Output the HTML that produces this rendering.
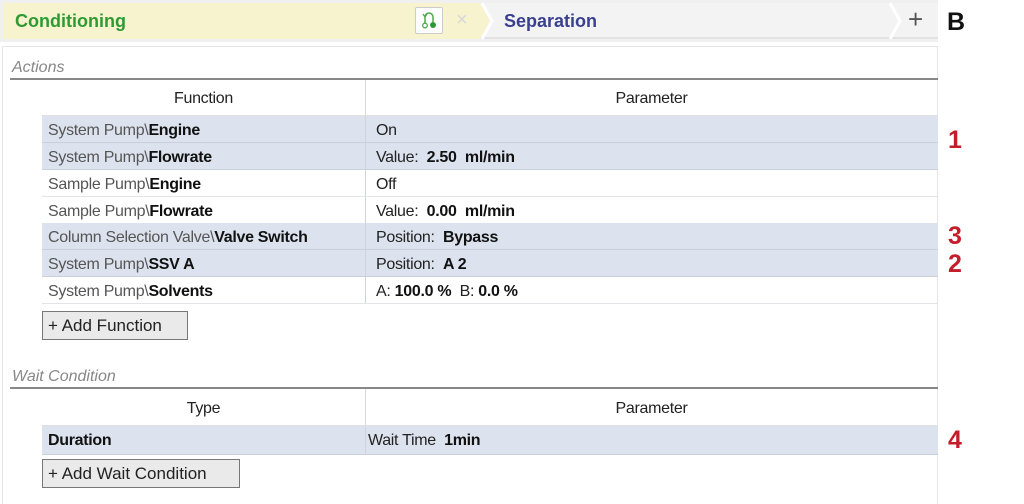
<!DOCTYPE html>
<html><head><meta charset="utf-8"><style>
*{margin:0;padding:0;box-sizing:border-box}
body{width:1024px;height:504px;background:#fff;font-family:"Liberation Sans",sans-serif;position:relative;overflow:hidden;color:#222}
.abs{position:absolute}
.t{font-size:16px;line-height:26px;white-space:nowrap;letter-spacing:-0.3px}
.g{color:#555}
b{color:#111}
.row{position:absolute;left:42px;width:896px;height:27px;border-bottom:1px solid #e2e4e8}
.row.h{background:#dce3ee;border-bottom:1px solid #c9d0dc}
.row .c1{position:absolute;left:6px;top:2px}
.row .c2{position:absolute;left:334px;top:2px}
.row::after{content:"";position:absolute;left:323px;top:0;bottom:0;width:1px;background:#d0d4da}
.hdr{position:absolute;left:42px;width:896px;height:36px;border-bottom:1px solid #e0e0e0}
.hdr::after{content:"";position:absolute;left:323px;top:0;bottom:0;width:1px;background:#d8d8d8}
.btn{position:absolute;left:42px;height:29px;border:1px solid #777;background:#eaeaea;font-size:17px;line-height:27px;padding:0 5px;white-space:nowrap;color:#222}
.red{position:absolute;left:948px;color:#c41e2a;font-size:25px;line-height:28px;font-weight:bold}
.lbl{position:absolute;left:12px;font-style:italic;color:#888;font-size:16px}
</style></head><body>
<div class="abs" style="left:0;top:0;width:938px;height:42px;background:#f0f0f0"></div>
<div class="abs" style="left:3px;top:3px;width:935px;height:36px;background:#f3f3f3;border-bottom:2px solid #e2e2e2"></div>
<svg class="abs" style="left:0;top:0" width="940" height="42">
<polygon points="3,3 480,3 490,21 480,39 3,39" fill="#f7f3cf"/>
<polyline points="482,3 492,21 482,39" fill="none" stroke="#fff" stroke-width="3"/>
<polyline points="890,3 900,21 890,39" fill="none" stroke="#fff" stroke-width="3"/>
</svg>
<div class="abs" style="left:15px;top:11px;font-size:18px;font-weight:bold;color:#2f9a33">Conditioning</div>
<div class="abs" style="left:415px;top:7px;width:28px;height:27px;background:#fff;border:1px solid #ccc;border-radius:2px"></div>
<svg class="abs" style="left:418px;top:9px" width="22" height="22" viewBox="0 0 22 22"><path d="M7 14 V8 a4 4 0 0 1 8 0 V13" fill="none" stroke="#4caa4c" stroke-width="1.5"/><path d="M5 5 l2 3 l2 -3" fill="none" stroke="#4caa4c" stroke-width="1.3"/><circle cx="7" cy="16.5" r="2.3" fill="none" stroke="#4caa4c" stroke-width="1.3"/><circle cx="15" cy="16" r="3" fill="#2f9a33"/></svg>
<div class="abs" style="left:456px;top:9px;font-size:20px;color:#d8d8d8">×</div>
<div class="abs" style="left:504px;top:11px;font-size:18px;font-weight:bold;color:#3a3f8f">Separation</div>
<div class="abs" style="left:908px;top:4px;font-size:26px;color:#555">+</div>
<div class="abs" style="left:947px;top:8px;font-size:25px;font-weight:bold;color:#111">B</div>
<div class="abs" style="left:2px;top:46px;width:936px;height:458px;border-left:1px solid #e6e6e6;border-top:1px solid #e6e6e6;border-right:1px solid #e6e6e6"></div>
<div class="lbl" style="top:59px">Actions</div>
<div class="abs" style="left:10px;top:78px;width:928px;height:2px;background:#888"></div>
<div class="hdr" style="top:80px"><div class="t abs" style="left:0;width:323px;text-align:center;top:6px">Function</div><div class="t abs" style="left:323px;width:573px;text-align:center;top:6px">Parameter</div></div>
<div class="row h" style="top:116px"><div class="t c1 g">System Pump\<b>Engine</b></div><div class="t c2">On</div></div>
<div class="row h" style="top:143px"><div class="t c1 g">System Pump\<b>Flowrate</b></div><div class="t c2">Value: &nbsp;<b>2.50 &nbsp;ml/min</b></div></div>
<div class="row" style="top:170px"><div class="t c1 g">Sample Pump\<b>Engine</b></div><div class="t c2">Off</div></div>
<div class="row" style="top:197px"><div class="t c1 g">Sample Pump\<b>Flowrate</b></div><div class="t c2">Value: &nbsp;<b>0.00 &nbsp;ml/min</b></div></div>
<div class="row h" style="top:223px"><div class="t c1 g">Column Selection Valve\<b>Valve Switch</b></div><div class="t c2">Position: &nbsp;<b>Bypass</b></div></div>
<div class="row h" style="top:250px"><div class="t c1 g">System Pump\<b>SSV A</b></div><div class="t c2">Position: &nbsp;<b>A 2</b></div></div>
<div class="row" style="top:277px"><div class="t c1 g">System Pump\<b>Solvents</b></div><div class="t c2">A: <b>100.0 %</b> &nbsp;B: <b>0.0 %</b></div></div>
<div class="btn" style="top:311px;width:146px">+ Add Function</div>
<div class="lbl" style="top:368px">Wait Condition</div>
<div class="abs" style="left:10px;top:387px;width:928px;height:2px;background:#888"></div>
<div class="hdr" style="top:389px;height:37px"><div class="t abs" style="left:0;width:323px;text-align:center;top:7px">Type</div><div class="t abs" style="left:323px;width:573px;text-align:center;top:7px">Parameter</div></div>
<div class="row h" style="top:426px;height:29px"><div class="t c1" style="top:2px"><b>Duration</b></div><div class="t c2" style="left:326px;top:2px">Wait Time &nbsp;<b>1min</b></div></div>
<div class="btn" style="top:459px;width:198px">+ Add Wait Condition</div>
<div class="red" style="top:126px">1</div>
<div class="red" style="top:222px">3</div>
<div class="red" style="top:250px">2</div>
<div class="red" style="top:426px">4</div>
</body></html>
